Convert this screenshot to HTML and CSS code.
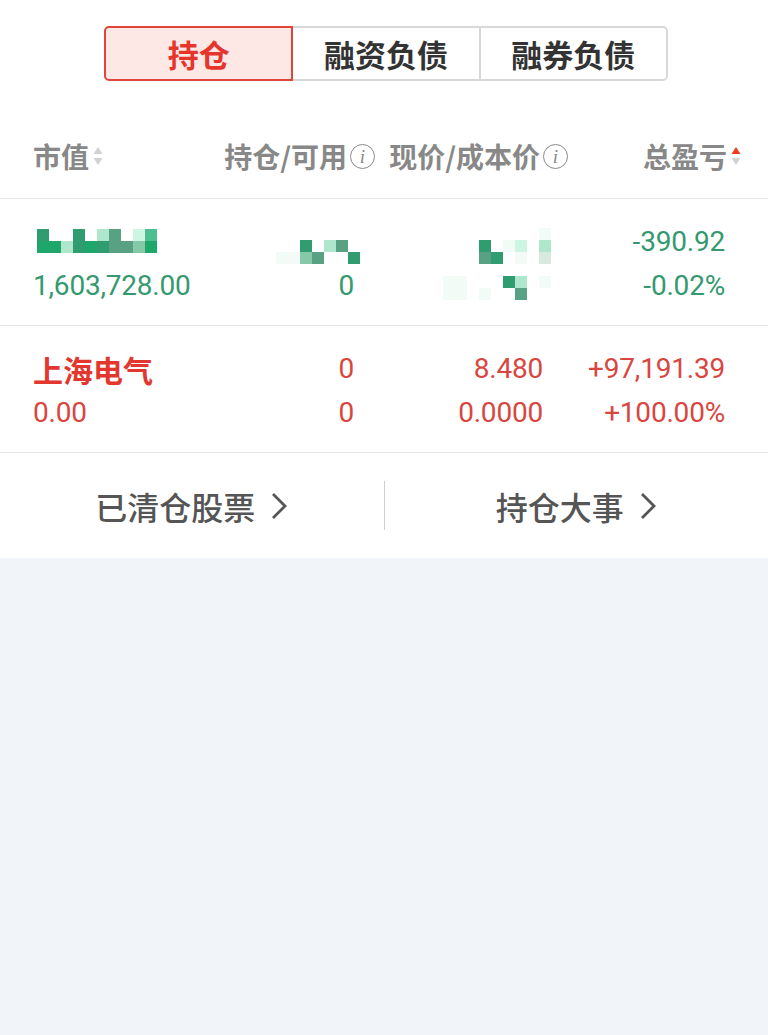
FILE: index.html
```html
<!DOCTYPE html>
<html lang="zh-CN">
<head>
    <meta charset="UTF-8">
    <meta name="viewport" content="width=device-width, initial-scale=1.0">
    <title>持仓</title>
    <link rel="stylesheet" href="styles.css">
</head>
<body>
    <div class="panel">
        <div class="tabs">
            <div class="tab active">持仓</div>
            <div class="tab">融资负债</div>
            <div class="tab">融券负债</div>
        </div>

        <div class="thead">
            <div class="th th-left">市值
                <svg class="sort" width="10" height="20" viewBox="0 0 10 20">
                    <path d="M5 1 L9.5 8 L0.5 8 Z" fill="#d2d2d2"/>
                    <path d="M5 19 L9.5 12 L0.5 12 Z" fill="#d2d2d2"/>
                </svg>
            </div>
            <div class="th th-info">持仓/可用<span class="info">i</span></div>
            <div class="th th-info wide">现价/成本价<span class="info">i</span></div>
            <div class="th th-sort">总盈亏
                <svg class="sort" width="10" height="20" viewBox="0 0 10 20">
                    <path d="M5 1 L9.5 8 L0.5 8 Z" fill="#ec3b1d"/>
                    <path d="M5 19 L9.5 12 L0.5 12 Z" fill="#d2d2d2"/>
                </svg>
            </div>
        </div>

        <!-- masked position -->
        <div class="row down">
            <div class="mosaic mosaic-name">
                <i class="d"></i><i></i><i></i><i class="d"></i><i></i><i class="l"></i><i class="m"></i><i></i><i class="p"></i><i class="g2"></i>
                <i class="g"></i><i class="g"></i><i class="l"></i><i class="d"></i><i class="g"></i><i class="d"></i><i class="m"></i><i class="m"></i><i class="s"></i><i class="g"></i>
            </div>
            <div class="mosaic mosaic-qty">
                <i></i><i></i><i class="d"></i><i></i><i class="l"></i><i class="m"></i><i></i>
                <i class="f"></i><i class="f"></i><i class="s"></i><i class="m"></i><i></i><i></i><i class="d"></i>
            </div>
            <div class="mosaic mosaic-price">
                <i></i><i></i><i></i><i></i><i></i><i></i><i></i><i></i><i class="f"></i>
                <i></i><i></i><i></i><i class="d"></i><i></i><i class="f"></i><i class="p"></i><i></i><i class="l"></i>
                <i></i><i></i><i></i><i class="m"></i><i class="d"></i><i></i><i class="f"></i><i></i><i class="pg"></i>
                <i></i><i></i><i></i><i></i><i></i><i></i><i></i><i></i><i></i>
                <i class="f"></i><i class="f"></i><i></i><i></i><i></i><i class="d"></i><i class="l"></i><i></i><i class="f"></i>
                <i class="f"></i><i class="f"></i><i></i><i class="f"></i><i></i><i></i><i class="m"></i><i></i><i></i>
            </div>
            <div class="cell right">-390.92</div>
            <div class="cell">1,603,728.00</div>
            <div class="cell right">0</div>
            <div class="cell right">-0.02%</div>
        </div>

        <div class="row up">
            <div class="cell name">上海电气</div>
            <div class="cell right">0</div>
            <div class="cell right">8.480</div>
            <div class="cell right">+97,191.39</div>
            <div class="cell">0.00</div>
            <div class="cell right">0</div>
            <div class="cell right">0.0000</div>
            <div class="cell right">+100.00%</div>
        </div>

        <div class="links">
            <div class="link">已清仓股票
                <svg class="chevron" width="18" height="30" viewBox="0 0 18 30">
                    <path d="M3 3 L15 15 L3 27" fill="none" stroke="#555" stroke-width="2.8"/>
                </svg>
            </div>
            <div class="sep"></div>
            <div class="link">持仓大事
                <svg class="chevron" width="18" height="30" viewBox="0 0 18 30">
                    <path d="M3 3 L15 15 L3 27" fill="none" stroke="#555" stroke-width="2.8"/>
                </svg>
            </div>
        </div>
    </div>
</body>
</html>
```

FILE: styles.css
```css
body {
    margin: 0;
    background: #f1f4f8;
    font-family: "Noto Sans CJK SC", "Noto Sans", sans-serif;
}

.panel {
    background: #fff;
}

/* tabs */
.tabs {
    display: flex;
    width: 564px;
    margin-left: 104px;
    padding-top: 26px;
    padding-bottom: 39px;
}

.tab {
    flex: 1;
    height: 55px;
    box-sizing: border-box;
    border: 2px solid #d8d8d8;
    border-left-width: 0;
    display: flex;
    align-items: center;
    justify-content: center;
    font-size: 31px;
    font-weight: bold;
    color: #333;
}

.tab:first-child {
    border-left-width: 2px;
    border-radius: 5px 0 0 5px;
}

.tab:last-child {
    border-radius: 0 5px 5px 0;
}

.tab.active {
    background: #fde8e6;
    border-color: #e0453c;
    color: #e5352d;
}

/* table head */
.thead {
    display: grid;
    grid-template-columns: 160px 161px 189px 182px;
    padding-left: 33px;
    height: 72px;
    padding-bottom: 6px;
    align-items: center;
    border-bottom: 1px solid #e8e8e8;
}

.th {
    display: flex;
    align-items: center;
    font-size: 28px;
    font-weight: bold;
    color: #888;
    white-space: nowrap;
}

.th-info {
    justify-content: flex-end;
    margin-right: -21px;
}

.th-info.wide {
    margin-right: -25px;
}

.th-sort {
    justify-content: flex-end;
    margin-right: -16px;
}

.sort {
    margin-left: 4px;
}

.info {
    width: 23px;
    height: 23px;
    margin-left: 3px;
    border: 1.3px solid #8a8a8a;
    border-radius: 50%;
    display: flex;
    align-items: center;
    justify-content: center;
    font-family: "Liberation Serif", serif;
    font-style: italic;
    font-weight: normal;
    font-size: 19px;
    line-height: 1;
}

/* rows */
.row {
    display: grid;
    grid-template-columns: 160px 161px 189px 182px;
    grid-auto-rows: 44px;
    padding: 21px 0 17px 33px;
    border-bottom: 1px solid #e6e6e6;
    font-family: Roboto, "Noto Sans", sans-serif;
    font-size: 28px;
    letter-spacing: -0.2px;
}

.row.down {
    color: #34996f;
}

.row.up {
    color: #d9463f;
}

.cell {
    line-height: 44px;
    white-space: nowrap;
}

.cell.right {
    text-align: right;
}

.cell.name {
    font-family: "Noto Sans CJK SC", sans-serif;
    font-weight: bold;
    font-size: 30px;
    letter-spacing: 0;
    color: #e2372f;
}

/* pixelated mask */
.mosaic {
    display: grid;
    grid-auto-rows: 12px;
    align-self: start;
}

.mosaic-name {
    grid-template-columns: repeat(10, 12px);
    margin: 9px 0 0 4px;
}

.mosaic-qty {
    grid-template-columns: repeat(7, 12px);
    justify-self: end;
    margin: 20px -6px 0 0;
}

.mosaic-price {
    grid-template-columns: repeat(9, 12px);
    grid-row: span 2;
    justify-self: end;
    margin: 8px -8px 0 0;
}

.mosaic .d { background: #2f9d6f; }
.mosaic .g { background: #1fa76b; }
.mosaic .g2 { background: #4dbe90; }
.mosaic .m { background: #58a283; }
.mosaic .s { background: #86c9a8; }
.mosaic .l { background: #aee7cc; }
.mosaic .p { background: #cdf5e3; }
.mosaic .pg { background: #d6eae0; }
.mosaic .f { background: #f2fbf6; }

/* bottom links */
.links {
    display: flex;
    align-items: center;
    height: 105px;
}

.link {
    flex: 1;
    display: flex;
    align-items: center;
    justify-content: center;
    gap: 15px;
    font-size: 32px;
    font-weight: 500;
    color: #555;
}

.sep {
    width: 1px;
    height: 49px;
    background: #cfcfcf;
}
```
